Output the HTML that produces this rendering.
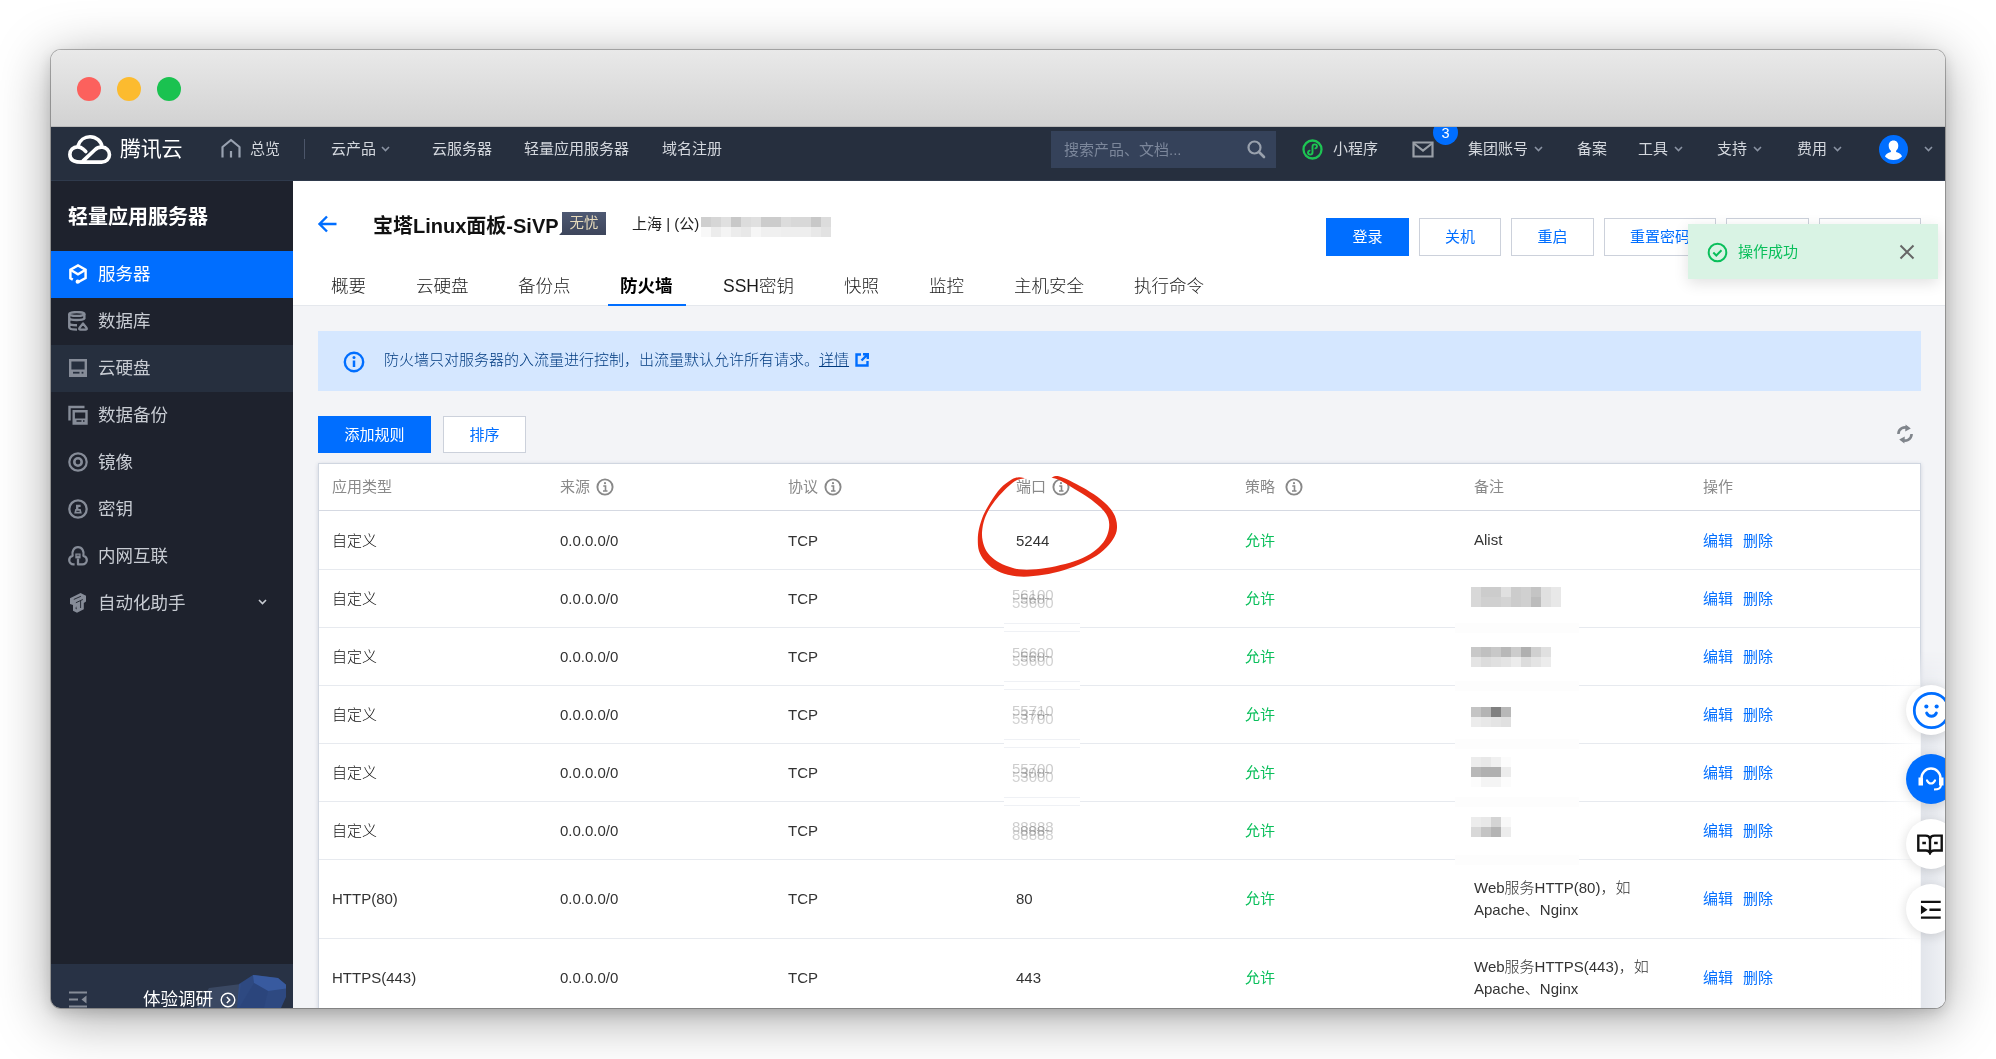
<!DOCTYPE html>
<html lang="zh-CN">
<head>
<meta charset="utf-8">
<title>防火墙 - 轻量应用服务器 - 腾讯云</title>
<style>
*{box-sizing:border-box;margin:0;padding:0}
html,body{width:1996px;height:1059px;overflow:hidden;background:#fff}
body{font-family:"Liberation Sans","Noto Sans CJK SC",sans-serif;font-size:15px;color:#222;position:relative}
.abs{position:absolute}
#win{position:absolute;left:51px;top:50px;width:1894px;height:958px;border-radius:10px;overflow:hidden;background:#f3f4f7}
#shadow{position:absolute;left:51px;top:50px;width:1894px;height:958px;border-radius:10px;
 box-shadow:0 0 0 1px rgba(0,0,0,.26),0 10px 54px rgba(0,0,0,.36),0 5px 14px rgba(0,0,0,.14)}
#titlebar{position:absolute;left:0;top:0;width:1894px;height:77px;background:linear-gradient(#e9e9e9,#d2d2d2);border-bottom:1px solid #b9b9b9}
.tl{position:absolute;top:27px;width:24px;height:24px;border-radius:50%}
#nav{position:absolute;left:0;top:77px;width:1894px;height:54px;overflow:hidden;background:#262f3e;color:#d4d8de;border-bottom:1px solid #2f3a4c}
#nav .t{position:absolute;top:0;line-height:43px;font-size:15px;white-space:nowrap}
#side{position:absolute;left:0;top:131px;width:242px;height:827px;background:#1e222d;color:#c8ccd3}
#side .it{position:absolute;left:0;width:242px;height:47px;line-height:46px;font-size:17.5px;padding-left:47px;white-space:nowrap}
#main{position:absolute;left:242px;top:131px;width:1652px;height:827px;background:#f3f4f7}
#head{position:absolute;left:0;top:0;width:1652px;height:125px;background:#fff;border-bottom:1px solid #e5e8ed}
.tab{position:absolute;top:92px;font-size:17.5px;line-height:26px;color:#1a1a1a;font-weight:300;white-space:nowrap}
.btn{position:absolute;top:37px;height:38px;line-height:36px;border:1px solid #ccd1db;background:#fff;color:#006eff;font-size:15px;text-align:center;white-space:nowrap}
#tbl{position:absolute;left:25px;top:282px;width:1603px;height:560px;background:#fff;border:1px solid #d0d6e0;border-bottom:0;box-shadow:0 1px 4px rgba(60,80,120,.2)}
.row{position:absolute;left:0;width:1601px;border-top:1px solid #e7eaef}
.c{position:absolute;font-size:15px;white-space:nowrap;line-height:22px;color:#111;font-weight:300}
.h{color:#8a8a8a;font-weight:400}
.g{color:#0abf5b;font-weight:400}
.b{color:#006eff;font-weight:400}
.l{color:#333}
.sm{mix-blend-mode:multiply;font-weight:400}
</style>
</head>
<body>
<div id="shadow"></div>
<div id="win">
 <div id="titlebar">
  <div class="tl" style="left:26px;background:#fc615d"></div>
  <div class="tl" style="left:66px;background:#fcbb2f"></div>
  <div class="tl" style="left:106px;background:#1ac250"></div>
 </div>
 <div id="nav">
  <svg class="abs" style="left:15px;top:4.5px" width="47" height="34.2" viewBox="0 0 44 32"><path d="M14.5 28.2h18.8c4.2 0 7.4-3.1 7.4-7 0-3.8-3-6.9-6.8-7-0.9-5.6-5.6-9.8-11.4-9.8-5.1 0-9.5 3.3-11 8M33.5 14.2c-2.6-0.1-4.7 0.8-6.6 2.6L16 27" fill="none" stroke="#fff" stroke-width="3.4" stroke-linecap="round" stroke-linejoin="round"/><path d="M14.5 28.2c-3.9 0-10.9-0.2-10.9-7.2 0-4 3.2-7.1 7.2-7.1 2.2 0 4 0.8 5.5 2.3l2.2 2.1" fill="none" stroke="#fff" stroke-width="3.4" stroke-linecap="round" stroke-linejoin="round"/></svg>
  <div class="t" style="left:69px;font-size:21px;color:#fff;letter-spacing:-.3px">腾讯云</div>
  <svg class="abs" style="left:169px;top:11px" width="22" height="21" viewBox="0 0 22 21"><path d="M2.5 19.5V9L11 2l8.5 7v10.5" fill="none" stroke="#98a1b0" stroke-width="2.2" stroke-linejoin="round"/><path d="M11 13v6.5" stroke="#98a1b0" stroke-width="2.2"/></svg>
  <div class="t" style="left:199px">总览</div>
  <div class="abs" style="left:253px;top:12px;width:1px;height:20px;background:#4c566a"></div>
  <div class="t" style="left:280px">云产品</div><svg class="abs" style="left:330px;top:19px" width="9" height="6" viewBox="0 0 9 6"><path d="M1 1l3.5 3.5L8 1" fill="none" stroke="#8a93a3" stroke-width="1.6"/></svg>
  <div class="t" style="left:381px">云服务器</div>
  <div class="t" style="left:473px">轻量应用服务器</div>
  <div class="t" style="left:611px">域名注册</div>
  <div class="abs" style="left:1000px;top:4px;width:225px;height:37px;background:#35425a"></div>
  <div class="t" style="left:1013px;color:#7c879b;font-size:15px;top:1px">搜索产品、文档...</div>
  <svg class="abs" style="left:1195px;top:12px" width="20" height="20" viewBox="0 0 20 20"><circle cx="8.5" cy="8.5" r="6" fill="none" stroke="#99a1ad" stroke-width="2.2"/><path d="M13 13l5 5" stroke="#99a1ad" stroke-width="2.6" stroke-linecap="round"/></svg>
  <svg class="abs" style="left:1251px;top:12px" width="21" height="21" viewBox="0 0 21 21"><circle cx="10.5" cy="10.5" r="9" fill="none" stroke="#1dc453" stroke-width="2.3"/><path d="M13.4 9.4c1-0.3 1.6-1 1.6-1.9 0-1.2-1-2.1-2.2-2.1-1.3 0-2.3 1-2.3 2.3v5.6c0 1.3-1 2.3-2.3 2.3-1.2 0-2.2-0.9-2.2-2.1 0-0.9 0.6-1.6 1.6-1.9" fill="none" stroke="#1dc453" stroke-width="1.9" stroke-linecap="round"/></svg>
  <div class="t" style="left:1282px">小程序</div>
  <svg class="abs" style="left:1361px;top:14px" width="22" height="17" viewBox="0 0 22 17"><path d="M1.5 1.5h19v14h-19z" fill="none" stroke="#9aa0a8" stroke-width="2.2"/><path d="M2 2.5l9 7 9-7" fill="none" stroke="#9aa0a8" stroke-width="2.2"/></svg>
  <div class="abs" style="left:1382px;top:-7px;width:25px;height:25px;border-radius:50%;background:#006eff;color:#fff;font-size:14.5px;line-height:27px;text-align:center">3</div>
  <div class="t" style="left:1417px">集团账号</div><svg class="abs" style="left:1483px;top:19px" width="9" height="6" viewBox="0 0 9 6"><path d="M1 1l3.5 3.5L8 1" fill="none" stroke="#8a93a3" stroke-width="1.6"/></svg>
  <div class="t" style="left:1526px">备案</div>
  <div class="t" style="left:1587px">工具</div><svg class="abs" style="left:1623px;top:19px" width="9" height="6" viewBox="0 0 9 6"><path d="M1 1l3.5 3.5L8 1" fill="none" stroke="#8a93a3" stroke-width="1.6"/></svg>
  <div class="t" style="left:1666px">支持</div><svg class="abs" style="left:1702px;top:19px" width="9" height="6" viewBox="0 0 9 6"><path d="M1 1l3.5 3.5L8 1" fill="none" stroke="#8a93a3" stroke-width="1.6"/></svg>
  <div class="t" style="left:1746px">费用</div><svg class="abs" style="left:1782px;top:19px" width="9" height="6" viewBox="0 0 9 6"><path d="M1 1l3.5 3.5L8 1" fill="none" stroke="#8a93a3" stroke-width="1.6"/></svg>
  <svg class="abs" style="left:1828px;top:8px" width="29" height="29" viewBox="0 0 29 29"><circle cx="14.5" cy="14.5" r="14.5" fill="#006eff"/><path d="M14.5 5.5c3 0 4.8 2.2 4.8 5.2 0 2.3-0.9 4-2.2 5v1.3c3.2 0.8 5.4 2.2 5.9 4.5-2.3 2.4-5.2 3.5-8.5 3.5s-6.2-1.1-8.5-3.5c0.5-2.3 2.7-3.7 5.9-4.5v-1.3c-1.3-1-2.2-2.7-2.2-5 0-3 1.8-5.2 4.8-5.2z" fill="#fff"/></svg>
  <svg class="abs" style="left:1873px;top:19px" width="9" height="6" viewBox="0 0 9 6"><path d="M1 1l3.5 3.5L8 1" fill="none" stroke="#8a93a3" stroke-width="1.6"/></svg>
 </div>
 <div id="side">
  <div class="abs" style="left:17px;top:21px;font-size:20px;font-weight:700;color:#fff;line-height:30px;white-space:nowrap">轻量应用服务器</div>
  <div class="it" style="top:70px;background:#006eff;color:#fff;"><svg class="abs" style="left:17px;top:13px" width="20" height="20" viewBox="0 0 20 20" style="overflow:visible"><path d="M4.8 15.6L2.4 14.2V5.8L10 1.5l7.6 4.3V14L10.4 18" fill="none" stroke="#fff" stroke-width="2.45" stroke-linejoin="miter"/><path d="M2.4 5.8L10 10.3l7.6-4.5" fill="none" stroke="#fff" stroke-width="2.45"/><circle cx="9.7" cy="17.7" r="2.1" fill="#fff"/></svg>服务器</div>
  <div class="it" style="top:117px;"><svg class="abs" style="left:17px;top:13px" width="20" height="20" viewBox="0 0 20 20" style="overflow:visible"><ellipse cx="8.8" cy="3" rx="7.6" ry="1.9" fill="none" stroke="#868c98" stroke-width="2.4"/><path d="M1.25 3V16.2M16.35 3V8M1.25 7.2C1.25 9.6 16.35 9.6 16.35 7.2M1.25 12C1.25 13.6 5 14.3 9 14.3M1.25 16.2C1.25 17.8 5 18.6 9 18.6" fill="none" stroke="#868c98" stroke-width="2.4"/><path d="M15 12.4L18.6 17C19.2 18 18.4 18.6 17.5 18.6H12.5C11.6 18.6 10.8 18 11.4 17Z" fill="none" stroke="#868c98" stroke-width="2.2" stroke-linejoin="round"/></svg>数据库</div>
  <div class="it" style="top:164px;background:#262f3e;"><svg class="abs" style="left:17px;top:13px" width="20" height="20" viewBox="0 0 20 20" style="overflow:visible"><path d="M2.2 2.2h15.6v15.6h-15.6z" fill="none" stroke="#868c98" stroke-width="2.4"/><path d="M2.2 11.5h15.6v6.3h-15.6z" fill="#868c98"/><path d="M5 14.7h6.5" stroke="#262f3e" stroke-width="1.8"/><path d="M13.6 14.7h1.8" stroke="#262f3e" stroke-width="1.8"/></svg>云硬盘</div>
  <div class="it" style="top:211px;"><svg class="abs" style="left:17px;top:13px" width="20" height="20" viewBox="0 0 20 20" style="overflow:visible"><path d="M1.5 15.5v-13.5h15" fill="none" stroke="#868c98" stroke-width="2.4"/><path d="M5.7 6.2h12.8v12.3h-12.8z" fill="none" stroke="#868c98" stroke-width="2.4"/><path d="M5.7 13.5h12.8v5h-12.8z" fill="#868c98"/><path d="M8.5 16h5M15 16h1.5" stroke="#1e222d" stroke-width="1.6"/></svg>数据备份</div>
  <div class="it" style="top:258px;"><svg class="abs" style="left:17px;top:13px" width="20" height="20" viewBox="0 0 20 20" style="overflow:visible"><circle cx="10" cy="10" r="8.7" fill="none" stroke="#868c98" stroke-width="2.2"/><circle cx="10" cy="10" r="3.7" fill="none" stroke="#868c98" stroke-width="2.6"/></svg>镜像</div>
  <div class="it" style="top:305px;"><svg class="abs" style="left:17px;top:13px" width="20" height="20" viewBox="0 0 20 20" style="overflow:visible"><circle cx="10" cy="10" r="8.7" fill="none" stroke="#868c98" stroke-width="2.3"/><path d="M6.2 14.6L7.3 9.9H8V5.8H12.6V7.9H10.4V9.9H12.7L13.8 14.6Z" fill="#868c98"/><path d="M8.4 12.3h3.2" stroke="#1e222d" stroke-width="1.1"/></svg>密钥</div>
  <div class="it" style="top:352px;"><svg class="abs" style="left:17px;top:13px" width="20" height="20" viewBox="0 0 20 20" style="overflow:visible"><path d="M6.6 18.4H5.6C3.1 18.4 1.2 16.5 1.2 14.1 1.2 12 2.6 10.3 4.6 9.8 3.7 5.2 5.9 1.2 10 1.2c4.1 0 6.3 4 5.4 8.6 2 0.5 3.4 2.2 3.4 4.3 0 2.4-1.9 4.3-4.4 4.3H10V12.4" fill="none" stroke="#868c98" stroke-width="2.3" stroke-linejoin="round"/><path d="M7.3 7.5h5.3v4.9h-5.3z" fill="#868c98"/><path d="M9.2 8.6v1.5M10.8 8.6v1.5" stroke="#1e222d" stroke-width="0.8"/></svg>内网互联</div>
  <div class="it" style="top:399px;"><svg class="abs" style="left:17px;top:13px" width="20" height="20" viewBox="0 0 20 20" style="overflow:visible"><path d="M2 5.2L12.6 0l5.4 2.8v5.8l-2.2 1.3v6.3L9 19.75 5 17.7V12L2 10.9z" fill="#868c98"/><path d="M5.8 6.4L12.9 3.3M7.85 9.75L14.8 6.5M12.6 7.9V15" stroke="#1e222d" stroke-width="0.9" fill="none"/><path d="M8.2 13.2l0.6 3.3-1.3-1.1z" fill="#1e222d"/></svg>自动化助手</div>
  <svg class="abs" style="left:207px;top:418px" width="9" height="6" viewBox="0 0 9 6"><path d="M1 1l3.5 3.5L8 1" fill="none" stroke="#c8ccd3" stroke-width="1.6"/></svg>
  <div class="abs" style="left:0;top:783px;width:242px;height:44px;background:#283245;overflow:hidden">
   <svg class="abs" style="left:143px;top:8px" width="92" height="36" viewBox="0 0 92 36"><path d="M3 36l12-20 32-4 -4 24z" fill="#56688f" opacity=".4"/><path d="M45 12l14-9 25 3 12 10-9 20h-44z" fill="#2f4f90" opacity=".8"/><path d="M59 3l25 3 12 10-22 3-14-8z" fill="#3b5fa6" opacity=".8"/><path d="M60 11l14 8-4 17h-25z" fill="#2a437a" opacity=".6"/></svg>
   <svg class="abs" style="left:17px;top:27px" width="20" height="17" viewBox="0 0 20 17"><path d="M1 1.5h18M1 8.5h9M1 15.5h18" stroke="#868c98" stroke-width="2"/><path d="M18.5 4.5v8l-5-4z" fill="#868c98"/></svg>
   <div class="abs" style="left:92px;top:22px;font-size:17.5px;color:#fff;line-height:26px;white-space:nowrap">体验调研</div>
   <svg class="abs" style="left:169px;top:28px" width="16" height="16" viewBox="0 0 16 16"><circle cx="8" cy="8" r="6.8" fill="none" stroke="#fff" stroke-width="1.4"/><path d="M6.8 5l3 3-3 3" fill="none" stroke="#fff" stroke-width="1.4"/></svg>
  </div>
 </div>
 <div id="main">
  <div id="head">
   <svg class="abs" style="left:24px;top:33px" width="21" height="20" viewBox="0 0 21 20"><path d="M10 2.5l-7.5 7.5 7.5 7.5M3 10h16.5" fill="none" stroke="#006eff" stroke-width="2.4"/></svg>
   <div class="abs" style="left:80px;top:30px;font-size:20px;font-weight:700;line-height:30px;color:#111;white-space:nowrap">宝塔Linux面板-SiVP</div>
   <div class="abs" style="left:266px;top:31px;width:47px;height:23px;padding-left:3px;background:linear-gradient(180deg,#4e5973,#3d455b);color:#e6dabb;font-size:14.5px;line-height:22px;text-align:center;clip-path:polygon(3px 0,100% 0,100% 100%,0 100%,3px calc(100% - 3px))">无忧</div>
   <div class="abs" style="left:339px;top:32px;font-size:15px;line-height:22px;color:#222;white-space:nowrap">上海 | (公)</div>
   <svg class="abs" style="left:408px;top:36px" width="130" height="20" viewBox="0 0 130 20" shape-rendering="crispEdges"><rect x="0" y="0" width="10" height="10" fill="#cfcfcf"/><rect x="10" y="0" width="10" height="10" fill="#d6d6d6"/><rect x="20" y="0" width="10" height="10" fill="#e0e0e0"/><rect x="30" y="0" width="10" height="10" fill="#c8c8c8"/><rect x="40" y="0" width="10" height="10" fill="#dcdcdc"/><rect x="50" y="0" width="10" height="10" fill="#e0e0e0"/><rect x="60" y="0" width="10" height="10" fill="#cccccc"/><rect x="70" y="0" width="10" height="10" fill="#cccccc"/><rect x="80" y="0" width="10" height="10" fill="#dcdcdc"/><rect x="90" y="0" width="10" height="10" fill="#d8d8d8"/><rect x="100" y="0" width="10" height="10" fill="#d8d8d8"/><rect x="110" y="0" width="10" height="10" fill="#c8c8c8"/><rect x="120" y="0" width="10" height="10" fill="#dcdcdc"/><rect x="0" y="10" width="10" height="10" fill="#f8f8f8"/><rect x="10" y="10" width="10" height="10" fill="#ececec"/><rect x="20" y="10" width="10" height="10" fill="#f4f4f4"/><rect x="30" y="10" width="10" height="10" fill="#ececec"/><rect x="40" y="10" width="10" height="10" fill="#e8e8e8"/><rect x="50" y="10" width="10" height="10" fill="#f6f6f6"/><rect x="60" y="10" width="10" height="10" fill="#f0f0f0"/><rect x="70" y="10" width="10" height="10" fill="#f0f0f0"/><rect x="80" y="10" width="10" height="10" fill="#eeeeee"/><rect x="90" y="10" width="10" height="10" fill="#eeeeee"/><rect x="100" y="10" width="10" height="10" fill="#eeeeee"/><rect x="110" y="10" width="10" height="10" fill="#e8e8e8"/><rect x="120" y="10" width="10" height="10" fill="#e2e2e2"/></svg>
   <div class="btn" style="left:1033px;width:83px;background:#006eff;border-color:#006eff;color:#fff">登录</div>
   <div class="btn" style="left:1126px;width:82px">关机</div>
   <div class="btn" style="left:1218px;width:83px">重启</div>
   <div class="btn" style="left:1311px;width:112px">重置密码</div>
   <div class="btn" style="left:1433px;width:83px">续费</div>
   <div class="btn" style="left:1526px;width:102px">更多操作</div>
   <div class="tab" style="left:38px;">概要</div>
   <div class="tab" style="left:123px;">云硬盘</div>
   <div class="tab" style="left:225px;">备份点</div>
   <div class="tab" style="left:327px;font-weight:700;color:#000;">防火墙</div>
   <div class="tab" style="left:430px;">SSH密钥</div>
   <div class="tab" style="left:551px;">快照</div>
   <div class="tab" style="left:636px;">监控</div>
   <div class="tab" style="left:721px;">主机安全</div>
   <div class="tab" style="left:841px;">执行命令</div>
   <div class="abs" style="left:315px;top:123px;width:78px;height:2px;background:#006eff"></div>
  </div>
  
  <div class="abs" style="left:25px;top:150px;width:1603px;height:60px;background:#d5e7ff">
   <svg class="abs" style="left:25px;top:20px" width="22" height="22" viewBox="0 0 22 22"><circle cx="11" cy="11" r="9.2" fill="none" stroke="#006eff" stroke-width="2.4"/><path d="M11 9.5v6.5" stroke="#006eff" stroke-width="2.5"/><circle cx="11" cy="6.5" r="1.5" fill="#006eff"/></svg>
   <div class="abs" style="left:66px;top:18px;font-size:15px;line-height:22px;color:#003b80;font-weight:300;white-space:nowrap">防火墙只对服务器的入流量进行控制，出流量默认允许所有请求。<span style="text-decoration:underline">详情</span></div>
   <svg class="abs" style="left:537px;top:22px" width="14" height="14" viewBox="0 0 14 14"><path d="M6 1.5h-4.5v11h11v-4.5" fill="none" stroke="#006eff" stroke-width="2.4"/><path d="M8 1.2h4.8v4.8M12.5 1.5l-6 6" fill="none" stroke="#006eff" stroke-width="2.4"/></svg>
  </div>
  <div class="abs" style="left:25px;top:235px;width:113px;height:37px;background:#006eff;color:#fff;font-size:15px;line-height:38px;text-align:center">添加规则</div>
  <div class="abs" style="left:150px;top:235px;width:83px;height:37px;background:#fff;border:1px solid #ccd1db;color:#006eff;font-size:15px;line-height:36px;text-align:center">排序</div>
  <svg class="abs" style="left:1603px;top:243px" width="18" height="20" viewBox="0 0 18 20"><path d="M15.6 10a6.6 6.6 0 0 1-10.2 5.5M2.4 10a6.6 6.6 0 0 1 10.2-5.5" fill="none" stroke="#80858c" stroke-width="2.6"/><path d="M9.6 0.4l5.2 4-5.6 3zM8.4 19.6l-5.2-4 5.6-3z" fill="#80858c"/></svg>
  <!--TBL--><div id="tbl">
   <div class="c h" style="left:13px;top:12px">应用类型</div>
   <div class="c h" style="left:241px;top:12px">来源</div><svg class="abs" style="left:277px;top:14px" width="18" height="18" viewBox="0 0 18 18"><circle cx="9" cy="9" r="7.6" fill="none" stroke="#888" stroke-width="1.9"/><path d="M7.3 8h2.2v4.8M7 13h4.5" fill="none" stroke="#888" stroke-width="1.6"/><circle cx="9" cy="5.2" r="1.1" fill="#888"/></svg>
   <div class="c h" style="left:469px;top:12px">协议</div><svg class="abs" style="left:505px;top:14px" width="18" height="18" viewBox="0 0 18 18"><circle cx="9" cy="9" r="7.6" fill="none" stroke="#888" stroke-width="1.9"/><path d="M7.3 8h2.2v4.8M7 13h4.5" fill="none" stroke="#888" stroke-width="1.6"/><circle cx="9" cy="5.2" r="1.1" fill="#888"/></svg>
   <div class="c h" style="left:697px;top:12px">端口</div><svg class="abs" style="left:733px;top:14px" width="18" height="18" viewBox="0 0 18 18"><circle cx="9" cy="9" r="7.6" fill="none" stroke="#888" stroke-width="1.9"/><path d="M7.3 8h2.2v4.8M7 13h4.5" fill="none" stroke="#888" stroke-width="1.6"/><circle cx="9" cy="5.2" r="1.1" fill="#888"/></svg>
   <div class="c h" style="left:926px;top:12px">策略</div><svg class="abs" style="left:966px;top:14px" width="18" height="18" viewBox="0 0 18 18"><circle cx="9" cy="9" r="7.6" fill="none" stroke="#888" stroke-width="1.9"/><path d="M7.3 8h2.2v4.8M7 13h4.5" fill="none" stroke="#888" stroke-width="1.6"/><circle cx="9" cy="5.2" r="1.1" fill="#888"/></svg>
   <div class="c h" style="left:1155px;top:12px">备注</div>
   <div class="c h" style="left:1384px;top:12px">操作</div>
   <div class="row" style="top:46px;height:59px;border-top-color:#d5d9e2"><div class="c" style="left:13px;top:19px">自定义</div><div class="c l" style="left:241px;top:19px">0.0.0.0/0</div><div class="c l" style="left:469px;top:19px">TCP</div><div class="c l" style="left:697px;top:19px">5244</div><div class="c g" style="left:926px;top:19px">允许</div><div class="c l" style="left:1155px;top:18px">Alist</div><div class="c b" style="left:1384px;top:19px">编辑</div><div class="c b" style="left:1424px;top:19px">删除</div></div>
   <div class="row" style="top:105px;height:58px;border-top-color:#e7eaef"><div class="c" style="left:13px;top:18px">自定义</div><div class="c l" style="left:241px;top:18px">0.0.0.0/0</div><div class="c l" style="left:469px;top:18px">TCP</div><div class="c sm" style="left:693px;top:14px;color:#cdcdcd">56100</div><div class="c sm" style="left:693px;top:22px;color:#d2d2d2">55600</div><div class="c sm" style="left:701px;top:18px;color:#c9c9c9;letter-spacing:0">560</div><div class="abs" style="left:702px;top:28px;width:30px;height:1px;background:repeating-linear-gradient(90deg,#aaa 0 4px,transparent 4px 8px)"></div><div class="c g" style="left:926px;top:18px">允许</div><svg class="abs" style="left:1152px;top:17px" width="90" height="20" viewBox="0 0 90 20" shape-rendering="crispEdges"><rect x="0" y="0" width="10" height="10" fill="#d8d8d8"/><rect x="10" y="0" width="10" height="10" fill="#cccccc"/><rect x="20" y="0" width="10" height="10" fill="#cccccc"/><rect x="30" y="0" width="10" height="10" fill="#e0e0e0"/><rect x="40" y="0" width="10" height="10" fill="#cccccc"/><rect x="50" y="0" width="10" height="10" fill="#d0d0d0"/><rect x="60" y="0" width="10" height="10" fill="#c4c4c4"/><rect x="70" y="0" width="10" height="10" fill="#e0e0e0"/><rect x="80" y="0" width="10" height="10" fill="#e8e8e8"/><rect x="0" y="10" width="10" height="10" fill="#d8d8d8"/><rect x="10" y="10" width="10" height="10" fill="#d0d0d0"/><rect x="20" y="10" width="10" height="10" fill="#d0d0d0"/><rect x="30" y="10" width="10" height="10" fill="#d4d4d4"/><rect x="40" y="10" width="10" height="10" fill="#cccccc"/><rect x="50" y="10" width="10" height="10" fill="#d0d0d0"/><rect x="60" y="10" width="10" height="10" fill="#bcbcbc"/><rect x="70" y="10" width="10" height="10" fill="#e0e0e0"/><rect x="80" y="10" width="10" height="10" fill="#e8e8e8"/></svg><div class="c b" style="left:1384px;top:18px">编辑</div><div class="c b" style="left:1424px;top:18px">删除</div></div>
   <div class="row" style="top:163px;height:58px;border-top-color:#e7eaef"><div class="c" style="left:13px;top:18px">自定义</div><div class="c l" style="left:241px;top:18px">0.0.0.0/0</div><div class="c l" style="left:469px;top:18px">TCP</div><div class="abs" style="left:685px;top:-5px;width:76px;height:9px;background:#fff;border-top:1px solid #eff1f5;border-bottom:1px solid #eff1f5"></div><div class="c sm" style="left:693px;top:14px;color:#cdcdcd">56600</div><div class="c sm" style="left:693px;top:22px;color:#d2d2d2">55600</div><div class="c sm" style="left:701px;top:18px;color:#c9c9c9;letter-spacing:0">560</div><div class="abs" style="left:702px;top:28px;width:30px;height:1px;background:repeating-linear-gradient(90deg,#aaa 0 4px,transparent 4px 8px)"></div><div class="c g" style="left:926px;top:18px">允许</div><div class="abs" style="left:1136px;top:-5px;width:124px;height:10px;background:#fdfdfd"></div><svg class="abs" style="left:1152px;top:19px" width="80" height="20" viewBox="0 0 80 20" shape-rendering="crispEdges"><rect x="0" y="0" width="10" height="10" fill="#c8c8c8"/><rect x="10" y="0" width="10" height="10" fill="#c0c0c0"/><rect x="20" y="0" width="10" height="10" fill="#c8c8c8"/><rect x="30" y="0" width="10" height="10" fill="#b8b8b8"/><rect x="40" y="0" width="10" height="10" fill="#cccccc"/><rect x="50" y="0" width="10" height="10" fill="#b0b0b0"/><rect x="60" y="0" width="10" height="10" fill="#d0d0d0"/><rect x="70" y="0" width="10" height="10" fill="#e0e0e0"/><rect x="0" y="10" width="10" height="10" fill="#e4e4e4"/><rect x="10" y="10" width="10" height="10" fill="#dcdcdc"/><rect x="20" y="10" width="10" height="10" fill="#e0e0e0"/><rect x="30" y="10" width="10" height="10" fill="#e4e4e4"/><rect x="40" y="10" width="10" height="10" fill="#ececec"/><rect x="50" y="10" width="10" height="10" fill="#dcdcdc"/><rect x="60" y="10" width="10" height="10" fill="#e4e4e4"/><rect x="70" y="10" width="10" height="10" fill="#ececec"/></svg><div class="c b" style="left:1384px;top:18px">编辑</div><div class="c b" style="left:1424px;top:18px">删除</div></div>
   <div class="row" style="top:221px;height:58px;border-top-color:#e7eaef"><div class="c" style="left:13px;top:18px">自定义</div><div class="c l" style="left:241px;top:18px">0.0.0.0/0</div><div class="c l" style="left:469px;top:18px">TCP</div><div class="abs" style="left:685px;top:-5px;width:76px;height:9px;background:#fff;border-top:1px solid #eff1f5;border-bottom:1px solid #eff1f5"></div><div class="c sm" style="left:693px;top:14px;color:#cdcdcd">55710</div><div class="c sm" style="left:693px;top:22px;color:#d2d2d2">53700</div><div class="c sm" style="left:701px;top:18px;color:#c9c9c9;letter-spacing:0">370</div><div class="abs" style="left:702px;top:28px;width:30px;height:1px;background:repeating-linear-gradient(90deg,#aaa 0 4px,transparent 4px 8px)"></div><div class="c g" style="left:926px;top:18px">允许</div><div class="abs" style="left:1136px;top:-5px;width:124px;height:10px;background:#fdfdfd"></div><svg class="abs" style="left:1152px;top:21px" width="40" height="20" viewBox="0 0 40 20" shape-rendering="crispEdges"><rect x="0" y="0" width="10" height="10" fill="#c4c4c4"/><rect x="10" y="0" width="10" height="10" fill="#b4b4b4"/><rect x="20" y="0" width="10" height="10" fill="#808080"/><rect x="30" y="0" width="10" height="10" fill="#b8b8b8"/><rect x="0" y="10" width="10" height="10" fill="#ececec"/><rect x="10" y="10" width="10" height="10" fill="#e8e8e8"/><rect x="20" y="10" width="10" height="10" fill="#e4e4e4"/><rect x="30" y="10" width="10" height="10" fill="#e0e0e0"/></svg><div class="c b" style="left:1384px;top:18px">编辑</div><div class="c b" style="left:1424px;top:18px">删除</div></div>
   <div class="row" style="top:279px;height:58px;border-top-color:#e7eaef"><div class="c" style="left:13px;top:18px">自定义</div><div class="c l" style="left:241px;top:18px">0.0.0.0/0</div><div class="c l" style="left:469px;top:18px">TCP</div><div class="abs" style="left:685px;top:-5px;width:76px;height:9px;background:#fff;border-top:1px solid #eff1f5;border-bottom:1px solid #eff1f5"></div><div class="c sm" style="left:693px;top:14px;color:#cdcdcd">55700</div><div class="c sm" style="left:693px;top:22px;color:#d2d2d2">53000</div><div class="c sm" style="left:701px;top:18px;color:#c9c9c9;letter-spacing:0">300</div><div class="abs" style="left:702px;top:28px;width:30px;height:1px;background:repeating-linear-gradient(90deg,#aaa 0 4px,transparent 4px 8px)"></div><div class="c g" style="left:926px;top:18px">允许</div><div class="abs" style="left:1136px;top:-5px;width:124px;height:10px;background:#fdfdfd"></div><svg class="abs" style="left:1152px;top:13px" width="40" height="30" viewBox="0 0 40 30" shape-rendering="crispEdges"><rect x="0" y="0" width="10" height="10" fill="#ececec"/><rect x="10" y="0" width="10" height="10" fill="#e8e8e8"/><rect x="20" y="0" width="10" height="10" fill="#f0f0f0"/><rect x="30" y="0" width="10" height="10" fill="#fcfcfc"/><rect x="0" y="10" width="10" height="10" fill="#b8b8b8"/><rect x="10" y="10" width="10" height="10" fill="#b0b0b0"/><rect x="20" y="10" width="10" height="10" fill="#b0b0b0"/><rect x="30" y="10" width="10" height="10" fill="#ececec"/><rect x="0" y="20" width="10" height="10" fill="#fcfcfc"/><rect x="10" y="20" width="10" height="10" fill="#f4f4f4"/><rect x="20" y="20" width="10" height="10" fill="#f4f4f4"/><rect x="30" y="20" width="10" height="10" fill="#fcfcfc"/></svg><div class="c b" style="left:1384px;top:18px">编辑</div><div class="c b" style="left:1424px;top:18px">删除</div></div>
   <div class="row" style="top:337px;height:58px;border-top-color:#e7eaef"><div class="c" style="left:13px;top:18px">自定义</div><div class="c l" style="left:241px;top:18px">0.0.0.0/0</div><div class="c l" style="left:469px;top:18px">TCP</div><div class="abs" style="left:685px;top:-5px;width:76px;height:9px;background:#fff;border-top:1px solid #eff1f5;border-bottom:1px solid #eff1f5"></div><div class="c sm" style="left:693px;top:14px;color:#cdcdcd">88888</div><div class="c sm" style="left:693px;top:22px;color:#d2d2d2">88888</div><div class="c sm" style="left:701px;top:18px;color:#c9c9c9;letter-spacing:0">888</div><div class="abs" style="left:702px;top:28px;width:30px;height:1px;background:repeating-linear-gradient(90deg,#aaa 0 4px,transparent 4px 8px)"></div><div class="c g" style="left:926px;top:18px">允许</div><div class="abs" style="left:1136px;top:-5px;width:124px;height:10px;background:#fdfdfd"></div><svg class="abs" style="left:1152px;top:15px" width="40" height="20" viewBox="0 0 40 20" shape-rendering="crispEdges"><rect x="0" y="0" width="10" height="10" fill="#ececec"/><rect x="10" y="0" width="10" height="10" fill="#e8e8e8"/><rect x="20" y="0" width="10" height="10" fill="#d4d4d4"/><rect x="30" y="0" width="10" height="10" fill="#f8f8f8"/><rect x="0" y="10" width="10" height="10" fill="#d8d8d8"/><rect x="10" y="10" width="10" height="10" fill="#c4c4c4"/><rect x="20" y="10" width="10" height="10" fill="#b4b4b4"/><rect x="30" y="10" width="10" height="10" fill="#ececec"/></svg><div class="c b" style="left:1384px;top:18px">编辑</div><div class="c b" style="left:1424px;top:18px">删除</div></div>
   <div class="row" style="top:395px;height:79px;border-top-color:#e7eaef"><div class="abs" style="left:1136px;top:-5px;width:124px;height:10px;background:#fdfdfd"></div><div class="c l" style="left:13px;top:28px">HTTP(80)</div><div class="c l" style="left:241px;top:28px">0.0.0.0/0</div><div class="c l" style="left:469px;top:28px">TCP</div><div class="c l" style="left:697px;top:28px">80</div><div class="c g" style="left:926px;top:28px">允许</div><div class="c" style="left:1155px;top:17px;color:#333">Web服务HTTP(80)，如<br>Apache、Nginx</div><div class="c b" style="left:1384px;top:28px">编辑</div><div class="c b" style="left:1424px;top:28px">删除</div></div>
   <div class="row" style="top:474px;height:79px;border-top-color:#e7eaef"><div class="c l" style="left:13px;top:28px">HTTPS(443)</div><div class="c l" style="left:241px;top:28px">0.0.0.0/0</div><div class="c l" style="left:469px;top:28px">TCP</div><div class="c l" style="left:697px;top:28px">443</div><div class="c g" style="left:926px;top:28px">允许</div><div class="c" style="left:1155px;top:17px;color:#333">Web服务HTTPS(443)，如<br>Apache、Nginx</div><div class="c b" style="left:1384px;top:28px">编辑</div><div class="c b" style="left:1424px;top:28px">删除</div></div>
  </div><!--/TBL-->
  <div class="abs" style="left:1395px;top:43px;width:250px;height:55px;background:#d9f3e4;box-shadow:0 4px 14px rgba(0,0,0,.12)">
   <svg class="abs" style="left:19px;top:18px" width="21" height="21" viewBox="0 0 21 21"><circle cx="10.5" cy="10.5" r="8.8" fill="none" stroke="#0abf5b" stroke-width="2"/><path d="M6.3 10.5l3 3 5.2-5.2" fill="none" stroke="#0abf5b" stroke-width="2"/></svg>
   <div class="abs" style="left:50px;top:17px;font-size:15px;line-height:22px;color:#0abf5b;white-space:nowrap">操作成功</div>
   <svg class="abs" style="left:211px;top:20px" width="16" height="16" viewBox="0 0 16 16"><path d="M1.5 1.5l13 13M14.5 1.5l-13 13" stroke="#666" stroke-width="2"/></svg>
  </div>

 
  <div class="abs" style="left:1628px;top:470px;width:24px;height:357px;background:linear-gradient(90deg,#e2e5eb,#eff1f5);-webkit-mask-image:linear-gradient(180deg,transparent,#000 15%);mask-image:linear-gradient(180deg,transparent,#000 15%)"></div>
  <div class="abs" style="left:1588px;top:470px;width:40px;height:357px;background:linear-gradient(90deg,rgba(255,255,255,0),rgba(255,255,255,.85) 85%);-webkit-mask-image:linear-gradient(180deg,transparent,#000 15%);mask-image:linear-gradient(180deg,transparent,#000 15%)"></div>
  <div class="abs" style="left:1613px;top:504px;width:50px;height:50px;border-radius:50%;background:#fff;box-shadow:0 2px 12px rgba(0,0,0,.14)">
   <svg class="abs" style="left:5.5px;top:5.5px" width="39" height="39" viewBox="0 0 34 34"><circle cx="17" cy="17" r="15" fill="none" stroke="#006eff" stroke-width="2.4"/><circle cx="12.5" cy="13.5" r="1.8" fill="#006eff"/><circle cx="21.5" cy="13.5" r="1.8" fill="#006eff"/><path d="M12.8 19.3c.9 1.9 2.3 2.8 4.2 2.8s3.3-.9 4.2-2.8" fill="none" stroke="#006eff" stroke-width="2.6" stroke-linecap="round"/></svg>
  </div>
  <div class="abs" style="left:1613px;top:573px;width:50px;height:50px;border-radius:50%;background:#006eff;box-shadow:0 2px 12px rgba(0,0,0,.14)">
   <svg class="abs" style="left:11px;top:11px" width="28" height="28" viewBox="0 0 28 28"><path d="M4.5 17v-4a9.5 9.5 0 0 1 19 0v4" fill="none" stroke="#fff" stroke-width="2.4"/><path d="M1.5 12.5h4.5v8h-4.5zM22 12.5h4.5v8h-4.5z" fill="#fff"/><path d="M10 15.5c1 2 2.5 3 4 3s3-1 4-3" fill="none" stroke="#fff" stroke-width="2.2" stroke-linecap="round"/><path d="M24 20c0 3-3 4.5-7 4.5" fill="none" stroke="#fff" stroke-width="2"/></svg>
  </div>
  <div class="abs" style="left:1613px;top:638px;width:50px;height:50px;border-radius:50%;background:#fff;box-shadow:0 2px 12px rgba(0,0,0,.14)">
   <svg class="abs" style="left:11px;top:15px" width="26" height="21" viewBox="0 0 26 21"><path d="M1.3 1.6H8.5C11 1.6 12.6 2.8 13 5c.4-2.2 2-3.4 4.5-3.4H24.7V16.5H17c-2 0-3.3.8-4 2.5-.7-1.7-2-2.5-4-2.5H1.3z" fill="none" stroke="#111" stroke-width="2.4" stroke-linejoin="miter"/><path d="M13 5v13.5" stroke="#111" stroke-width="2.4"/><path d="M5.3 9h3.6M17.1 9h3.6" stroke="#111" stroke-width="2.4"/></svg>
  </div>
  <div class="abs" style="left:1613px;top:703px;width:50px;height:50px;border-radius:50%;background:#fff;box-shadow:0 2px 12px rgba(0,0,0,.14)">
   <svg class="abs" style="left:14px;top:15.5px" width="22.6" height="19.5" viewBox="0 0 24 20" preserveAspectRatio="none"><path d="M1 2h21M10 10h12M1 18h21" stroke="#111" stroke-width="2.4"/><path d="M1 5.5l7 4.5-7 4.5z" fill="#111"/></svg>
  </div>
  <svg class="abs" id="red" style="left:667px;top:279px" width="180" height="130" viewBox="0 0 180 130"><path d="M67.5 18.7C66.1 18.4 61.6 17.0 58.9 17.2C56.3 17.4 54.6 17.8 51.6 19.6C48.5 21.5 44.0 24.6 40.5 28.2C37.0 31.9 33.6 37.2 30.7 41.7C27.8 46.3 25.3 50.8 23.3 55.3C21.4 59.8 20.0 64.7 19.0 68.8C18.1 72.9 17.8 76.1 17.8 79.8C17.8 83.5 17.9 87.4 19.0 90.9C20.2 94.3 22.0 97.6 24.6 100.7C27.1 103.8 30.5 106.9 34.4 109.3C38.3 111.6 43.0 113.6 47.9 114.8C52.8 116.0 57.9 116.7 63.9 116.7C69.8 116.7 76.7 115.9 83.5 114.8C90.3 113.7 97.6 111.9 104.4 109.9C111.1 107.9 118.1 105.3 124.0 102.5C130.0 99.8 135.5 96.7 140.0 93.3C144.5 89.9 148.3 86.0 151.0 82.3C153.8 78.6 155.7 75.1 156.6 71.2C157.4 67.3 157.1 62.8 155.9 58.9C154.8 55.1 152.9 51.6 149.8 47.9C146.7 44.2 142.0 40.2 137.5 36.8C133.0 33.5 127.3 30.3 122.8 27.6C118.3 25.0 114.0 22.6 110.5 20.9C107.0 19.1 104.4 18.0 101.9 17.2C99.5 16.4 97.5 15.9 95.8 16.0C94.0 16.1 92.2 17.5 91.5 17.8C92.6 18.1 95.1 18.2 98.2 19.6C101.4 21.1 106.0 23.7 110.5 26.4C115.0 29.1 120.7 32.5 125.2 35.6C129.7 38.7 134.0 41.7 137.5 44.8C141.0 47.9 144.2 50.9 146.1 54.0C148.1 57.2 149.0 60.4 149.2 63.9C149.4 67.3 148.7 71.4 147.3 74.9C146.0 78.4 144.1 81.6 141.2 84.7C138.3 87.9 134.7 91.2 130.2 93.9C125.7 96.7 119.9 99.3 114.2 101.3C108.5 103.3 102.1 104.9 95.8 106.2C89.4 107.5 82.3 108.8 76.1 109.3C70.0 109.8 64.1 109.9 58.9 109.3C53.8 108.7 49.5 107.2 45.4 105.6C41.3 104.0 37.6 101.9 34.4 99.5C31.2 97.0 28.3 93.9 26.4 90.9C24.5 87.8 23.4 84.3 22.7 81.0C22.0 77.8 21.8 74.9 22.1 71.2C22.4 67.5 23.1 63.0 24.6 58.9C26.0 54.8 28.2 50.5 30.7 46.7C33.2 42.8 36.2 39.1 39.3 35.6C42.4 32.1 46.3 28.3 49.1 25.8C52.0 23.2 54.0 21.5 56.5 20.3C58.9 19.0 62.0 18.7 63.9 18.4C65.7 18.2 66.9 18.6 67.5 18.7Z" fill="#e72b12"/></svg>
 </div>
</div>
</body>
</html>
